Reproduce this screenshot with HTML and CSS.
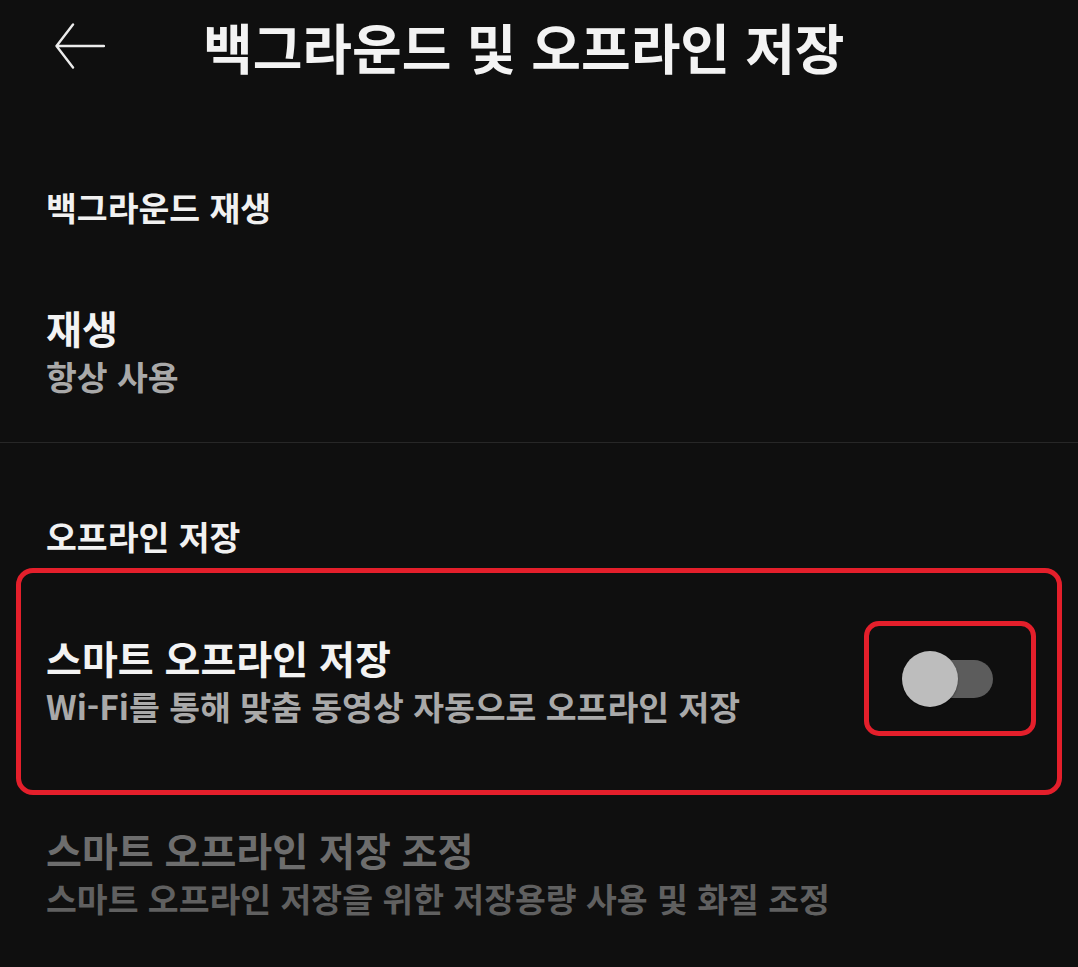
FILE: index.html
```html
<!DOCTYPE html>
<html lang="ko">
<head>
    <meta charset="UTF-8">
    <meta name="viewport" content="width=device-width, initial-scale=1.0">
    <title>백그라운드 및 오프라인 저장</title>
    <link rel="stylesheet" href="styles.css">
</head>
<body>
    <!-- Header -->
    <header class="topbar">
        <a href="#" class="back-btn" aria-label="뒤로">
            <svg width="50" height="46" viewBox="0 0 50 46">
                <path d="M49 23 H2 M18 1.5 L1.5 23 L18 44.5" fill="none" stroke="#ececec" stroke-width="2.4" stroke-linecap="round" stroke-linejoin="round"/>
            </svg>
        </a>
        <h1 class="page-title">백그라운드 및 오프라인 저장</h1>
    </header>

    <!-- Background play -->
    <section class="group">
        <div class="group-title first">백그라운드 재생</div>
        <div class="item item-play">
            <div class="item-text">
                <div class="item-title">재생</div>
                <div class="item-sub">항상 사용</div>
            </div>
        </div>
    </section>

    <div class="divider"></div>

    <!-- Offline -->
    <section class="group">
        <div class="group-title">오프라인 저장</div>

        <div class="item item-smart highlight">
            <div class="item-text">
                <div class="item-title">스마트 오프라인 저장</div>
                <div class="item-sub">Wi-Fi를 통해 맞춤 동영상 자동으로 오프라인 저장</div>
            </div>
            <div class="toggle-wrap">
                <div class="toggle">
                    <div class="toggle-knob"></div>
                </div>
            </div>
        </div>

        <div class="item item-adjust disabled">
            <div class="item-text">
                <div class="item-title">스마트 오프라인 저장 조정</div>
                <div class="item-sub">스마트 오프라인 저장을 위한 저장용량 사용 및 화질 조정</div>
            </div>
        </div>
    </section>
</body>
</html>
```

FILE: styles.css
```css
body {
    margin: 0;
    padding: 0;
    background: #0f0f0f;
    color: #f1f1f1;
    font-family: "Noto Sans CJK KR", "Noto Sans", sans-serif;
}

/* Header */
.topbar {
    height: 98px;
    display: flex;
    align-items: center;
    padding-left: 55px;
}

.back-btn {
    display: flex;
    width: 50px;
    height: 46px;
    margin-top: -6px;
}

.page-title {
    margin: -4px 0 0 98px;
    font-size: 54px;
    line-height: 60px;
    font-weight: 700;
    color: #f3f3f3;
}

/* Groups */
.group-title {
    padding-left: 46px;
    margin-top: 73px;
    font-size: 33.5px;
    line-height: 40px;
    font-weight: 700;
    color: #f1f1f1;
}

.group-title.first {
    margin-top: 89px;
}

.item {
    display: flex;
    align-items: center;
    padding: 0 42px 0 46px;
}

.item-title {
    font-size: 39px;
    line-height: 44px;
    font-weight: 700;
    color: #f3f3f3;
}

.item-sub {
    margin-top: 7px;
    font-size: 33.5px;
    line-height: 40px;
    font-weight: 700;
    color: #a9a9a9;
}

.item-text {
    flex: 1;
}

.item-play {
    margin-top: 78px;
}

.divider {
    height: 1px;
    background: #272727;
    margin-top: 46px;
}

/* Smart offline row with red highlight */
.item-smart {
    position: relative;
    margin-top: 12px;
    height: 219px;
    padding-bottom: 8px;
}

.highlight::after {
    content: "";
    position: absolute;
    top: 0;
    bottom: 0;
    left: 16px;
    right: 16px;
    border: 5px solid #e41f2b;
    border-radius: 17px;
    pointer-events: none;
}

.item-smart .item-text {
    margin-top: 6px;
}

.toggle-wrap {
    width: 129px;
    height: 105px;
    border: 5px solid #e41f2b;
    border-radius: 15px;
    display: flex;
    align-items: center;
    padding-left: 33px;
    box-sizing: content-box;
    margin-top: 2px;
}

.toggle {
    position: relative;
    width: 91px;
    height: 38px;
    display: flex;
    align-items: center;
}

.toggle::before {
    content: "";
    position: absolute;
    left: 3px;
    right: 0;
    top: 0;
    bottom: 0;
    background: #5c5c5c;
    border-radius: 19px;
}

.toggle-knob {
    position: relative;
    width: 56px;
    height: 56px;
    border-radius: 50%;
    background: #bdbdbd;
    box-shadow: 0 1px 2px rgba(0, 0, 0, 0.4);
}

/* Disabled row */
.item-adjust {
    margin-top: 32px;
}

.disabled .item-title {
    color: #6d6d6d;
}

.disabled .item-sub {
    color: #606060;
}
```
